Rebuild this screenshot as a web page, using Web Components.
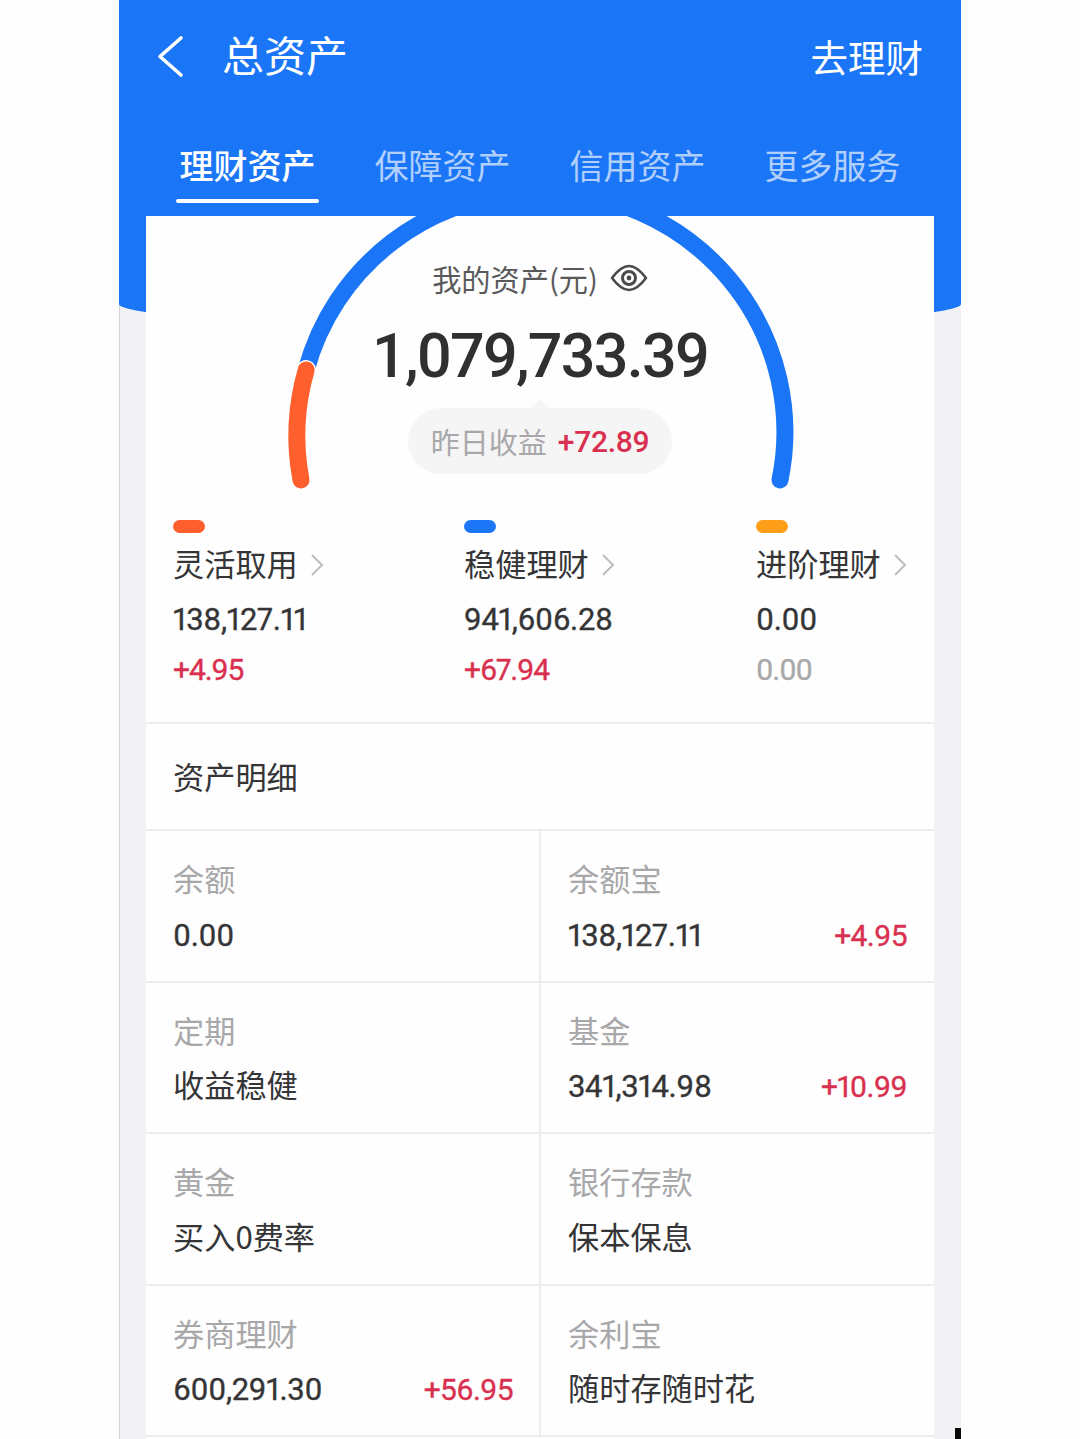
<!DOCTYPE html>
<html lang="zh-CN">
  <head>
    <meta charset="UTF-8" />
    <meta name="viewport" content="width=device-width, initial-scale=1.0" />
    <title>总资产</title>
    <style>
      :root {
        --blue: #1a76f7;
        --red: #d9304f;
        --ink: #353537;
        --muted: #a8a8aa;
        --line: #ededef;
        --cjk: "Noto Sans CJK SC", "Noto Sans", sans-serif;
        --num: Roboto, "Noto Sans CJK SC", sans-serif;
      }
      html,
      body {
        margin: 0;
        background: #fefefe;
      }
    </style>
  </head>
  <body>
    <asset-page>
      <top-bar slot="head" heading="总资产" action="去理财"></top-bar>
      <tab-strip slot="head">
        <tab-item active>理财资产</tab-item>
        <tab-item>保障资产</tab-item>
        <tab-item>信用资产</tab-item>
        <tab-item>更多服务</tab-item>
      </tab-strip>

      <asset-gauge amount="1,079,733.39" gain="+72.89"></asset-gauge>

      <split-row>
        <split-stat color="#ff5f2d" label="灵活取用" value="138,127.11" gain="+4.95"></split-stat>
        <split-stat color="#1a76f7" label="稳健理财" value="941,606.28" gain="+67.94"></split-stat>
        <split-stat color="#ff9f19" label="进阶理财" value="0.00" gain="0.00" flat></split-stat>
      </split-row>

      <section-title>资产明细</section-title>

      <detail-grid>
        <detail-cell label="余额" value="0.00"></detail-cell>
        <detail-cell label="余额宝" value="138,127.11" gain="+4.95"></detail-cell>
        <detail-cell label="定期" note="收益稳健"></detail-cell>
        <detail-cell label="基金" value="341,314.98" gain="+10.99"></detail-cell>
        <detail-cell label="黄金" note="买入0费率"></detail-cell>
        <detail-cell label="银行存款" note="保本保息"></detail-cell>
        <detail-cell label="券商理财" value="600,291.30" gain="+56.95"></detail-cell>
        <detail-cell label="余利宝" note="随时存随时花"></detail-cell>
      </detail-grid>
    </asset-page>

    <script>
      class AssetPage extends HTMLElement {
        constructor() {
          super();
          let shadow = this.attachShadow({ mode: "open" });
          shadow.innerHTML = `
            <style>
              :host {
                display: block;
                position: relative;
                box-sizing: border-box;
                width: 842px;
                height: 1439px;
                margin-left: 119px;
                overflow: hidden;
                background: #f2f2f4;
                box-shadow: inset 1px 0 0 #d4d4d6;
                font-family: var(--cjk);
              }
              .backdrop {
                position: absolute;
                top: 0;
                left: 0;
                right: 0;
                height: 327px;
                background: var(--blue);
                border-radius: 0 0 50% 50% / 0 0 23px 23px;
              }
              .head {
                position: relative;
                height: 216px;
              }
              .card {
                position: relative;
                margin: 0 27px;
                height: 1223px;
                background: #fefefe;
              }
              .mark {
                position: absolute;
                right: 0;
                bottom: 0;
                width: 6px;
                height: 11px;
                background: #0a0a0a;
              }
            </style>
            <div class="backdrop"></div>
            <div class="head"><slot name="head"></slot></div>
            <div class="card"><slot></slot></div>
            <div class="mark"></div>
          `;
        }
      }

      class TopBar extends HTMLElement {
        constructor() {
          super();
          let shadow = this.attachShadow({ mode: "open" });
          shadow.innerHTML = `
            <style>
              :host {
                display: flex;
                align-items: flex-start;
                height: 141px;
                color: #fff;
                padding: 0 38px 0 38px;
              }
              svg {
                margin-top: 35px;
                width: 28px;
                height: 43px;
              }
              h1 {
                margin: 25px 0 0 37px;
                font-size: 42px;
                line-height: 58px;
                font-weight: 400;
                flex: 1;
              }
              span {
                margin-top: 29px;
                font-size: 37.5px;
                line-height: 54px;
              }
            </style>
            <svg viewBox="0 0 28 43" fill="none" stroke="#fff" stroke-width="3.6" stroke-linecap="round" stroke-linejoin="round">
              <path d="M24 3 3 21.5 24 40" />
            </svg>
            <h1>${this.getAttribute("heading")}</h1>
            <span>${this.getAttribute("action")}</span>
          `;
        }
      }

      class TabStrip extends HTMLElement {
        constructor() {
          super();
          let shadow = this.attachShadow({ mode: "open" });
          shadow.innerHTML = `
            <style>
              :host {
                display: grid;
                grid-template-columns: repeat(4, 195px);
                padding: 0 31px;
              }
            </style>
            <slot></slot>
          `;
        }
      }

      class TabItem extends HTMLElement {
        constructor() {
          super();
          let shadow = this.attachShadow({ mode: "open" });
          shadow.innerHTML = `
            <style>
              :host {
                display: flex;
                justify-content: center;
                color: rgba(255, 255, 255, 0.68);
                font-size: 34px;
                line-height: 48px;
              }
              :host([active]) {
                color: #fff;
                font-weight: 500;
              }
              div {
                width: 143px;
                text-align: center;
                height: 71px;
                box-sizing: border-box;
              }
              :host([active]) div::after {
                content: "";
                display: block;
                height: 4px;
                margin-top: 10px;
                border-radius: 2px;
                background: #fff;
              }
            </style>
            <div><slot></slot></div>
          `;
        }
      }

      class AssetGauge extends HTMLElement {
        constructor() {
          super();
          let shadow = this.attachShadow({ mode: "open" });
          shadow.innerHTML = `
            <style>
              :host {
                display: grid;
                height: 290px;
                color: var(--ink);
              }
              svg,
              .info {
                grid-area: 1 / 1;
              }
              svg {
                display: block;
                width: 788px;
                height: 290px;
              }
              .info {
                display: flex;
                flex-direction: column;
                align-items: center;
                padding-top: 41px;
              }
              .caption {
                display: flex;
                align-items: center;
                gap: 12px;
                height: 42px;
                font-size: 29.2px;
                color: #59595b;
              }
              .caption svg {
                width: 38px;
                height: 30px;
              }
              .amount {
                font-family: var(--num);
                font-weight: 500;
                font-size: 61px;
                letter-spacing: -1.7px;
                line-height: 70px;
                margin-top: 22px;
                color: #303032;
              }
              .pill {
                position: relative;
                display: flex;
                align-items: center;
                gap: 11px;
                height: 66px;
                margin-top: 17px;
                padding: 0 23px;
                border-radius: 33px;
                background: #f5f5f6;
                font-size: 29px;
                color: var(--muted);
              }
              .pill::before {
                content: "";
                position: absolute;
                top: -9px;
                left: 50%;
                margin-left: -9px;
                border: 9px solid transparent;
                border-top: 0;
                border-bottom-color: #f5f5f6;
              }
              .pill b {
                font-family: var(--num);
                font-weight: 500;
                font-size: 30px;
                letter-spacing: -0.3px;
                color: var(--red);
              }
            </style>
            <svg viewBox="0 0 788 290" fill="none" stroke-width="17" stroke-linecap="round">
              <path d="M160.2 154A242.5 240 0 0 1 394.5 -24A242.5 240 0 0 1 634 264" stroke="#1a76f7" />
              <path d="M155 264A242.5 240 0 0 1 160.2 154" stroke="#fefefe" stroke-width="20" />
              <path d="M155 264A242.5 240 0 0 1 160.2 154" stroke="#ff5f2d" />
            </svg>
            <div class="info">
              <div class="caption">
                <span>我的资产(元)</span>
                <svg viewBox="0 0 38 30" fill="none" stroke="#4a4a4c" stroke-width="2.6" stroke-linejoin="round">
                  <path d="M2 15C8 7 13 3 19 3s11 4 17 12c-6 8-11 12-17 12S8 23 2 15Z" />
                  <circle cx="19" cy="15" r="6.5" stroke-width="3" />
                  <circle cx="19" cy="15" r="2.4" fill="#4a4a4c" stroke="none" />
                </svg>
              </div>
              <div class="amount">${this.getAttribute("amount")}</div>
              <div class="pill"><span>昨日收益</span><b>${this.getAttribute("gain")}</b></div>
            </div>
          `;
        }
      }

      class SplitRow extends HTMLElement {
        constructor() {
          super();
          let shadow = this.attachShadow({ mode: "open" });
          shadow.innerHTML = `
            <style>
              :host {
                display: grid;
                grid-template-columns: 291px 292px 1fr;
                box-sizing: border-box;
                height: 218px;
                padding: 14px 0 0 27px;
                border-bottom: 2px solid var(--line);
              }
            </style>
            <slot></slot>
          `;
        }
      }

      class SplitStat extends HTMLElement {
        constructor() {
          super();
          let shadow = this.attachShadow({ mode: "open" });
          shadow.innerHTML = `
            <style>
              :host {
                display: block;
                color: var(--ink);
              }
              .dot {
                width: 32px;
                height: 13px;
                border-radius: 6.5px;
                background: ${this.getAttribute("color")};
              }
              .label {
                display: flex;
                align-items: center;
                gap: 12px;
                margin-top: 7px;
                font-size: 31.2px;
                line-height: 46px;
              }
              .label svg {
                width: 14px;
                height: 24px;
                margin-top: 3px;
              }
              .value,
              .gain {
                font-family: var(--num);
                font-variant-numeric: proportional-nums;
                font-size: 31px;
                letter-spacing: -0.3px;
                line-height: 50px;
                -webkit-text-stroke: 0.35px currentColor;
              }
              .value {
                margin-top: 9px;
              }
              .gain {
                color: var(--red);
                font-size: 30px;
                letter-spacing: -1.1px;
              }
              :host([flat]) .gain {
                color: var(--muted);
              }
            </style>
            <div class="dot"></div>
            <div class="label">
              <span>${this.getAttribute("label")}</span>
              <svg viewBox="0 0 14 24" fill="none" stroke="#bdbdbf" stroke-width="2"><path d="M2 2 12 12 2 22" /></svg>
            </div>
            <div class="value">${this.getAttribute("value")}</div>
            <div class="gain">${this.getAttribute("gain")}</div>
          `;
        }
      }

      class SectionTitle extends HTMLElement {
        constructor() {
          super();
          let shadow = this.attachShadow({ mode: "open" });
          shadow.innerHTML = `
            <style>
              :host {
                display: flex;
                align-items: center;
                box-sizing: border-box;
                height: 107px;
                padding: 0 27px 2px;
                border-bottom: 2px solid var(--line);
                color: var(--ink);
                font-size: 31.2px;
              }
            </style>
            <slot></slot>
          `;
        }
      }

      class DetailGrid extends HTMLElement {
        constructor() {
          super();
          let shadow = this.attachShadow({ mode: "open" });
          shadow.innerHTML = `
            <style>
              :host {
                display: grid;
                grid-template-columns: 394px 394px;
                grid-auto-rows: 151.5px;
              }
            </style>
            <slot></slot>
          `;
        }
      }

      class DetailCell extends HTMLElement {
        constructor() {
          super();
          let shadow = this.attachShadow({ mode: "open" });
          let value = this.getAttribute("value");
          let note = this.getAttribute("note");
          let gain = this.getAttribute("gain");
          shadow.innerHTML = `
            <style>
              :host {
                display: block;
                box-sizing: border-box;
                padding: 24px 27px 0;
                border-bottom: 2px solid var(--line);
              }
              :host(:nth-child(even)) {
                margin-left: -1px;
                border-left: 2px solid var(--line);
                padding-left: 27px;
              }
              .label {
                font-size: 31.2px;
                line-height: 46px;
                color: var(--muted);
              }
              .row {
                display: flex;
                justify-content: space-between;
                align-items: center;
                height: 50px;
                margin-top: 9px;
                color: var(--ink);
              }
              .value,
              .gain {
                font-family: var(--num);
                font-variant-numeric: proportional-nums;
                font-size: 31px;
                letter-spacing: -0.3px;
                -webkit-text-stroke: 0.35px currentColor;
              }
              .gain {
                color: var(--red);
                font-size: 30px;
                letter-spacing: -0.6px;
              }
              .note {
                font-size: 31.2px;
                margin-top: -6px;
              }
            </style>
            <div class="label">${this.getAttribute("label")}</div>
            <div class="row">
              ${value ? `<span class="value">${value}</span>` : `<span class="note">${note}</span>`}
              ${gain ? `<span class="gain">${gain}</span>` : ""}
            </div>
          `;
        }
      }

      window.customElements.define("asset-page", AssetPage);
      window.customElements.define("top-bar", TopBar);
      window.customElements.define("tab-strip", TabStrip);
      window.customElements.define("tab-item", TabItem);
      window.customElements.define("asset-gauge", AssetGauge);
      window.customElements.define("split-row", SplitRow);
      window.customElements.define("split-stat", SplitStat);
      window.customElements.define("section-title", SectionTitle);
      window.customElements.define("detail-grid", DetailGrid);
      window.customElements.define("detail-cell", DetailCell);
    </script>
  </body>
</html>
